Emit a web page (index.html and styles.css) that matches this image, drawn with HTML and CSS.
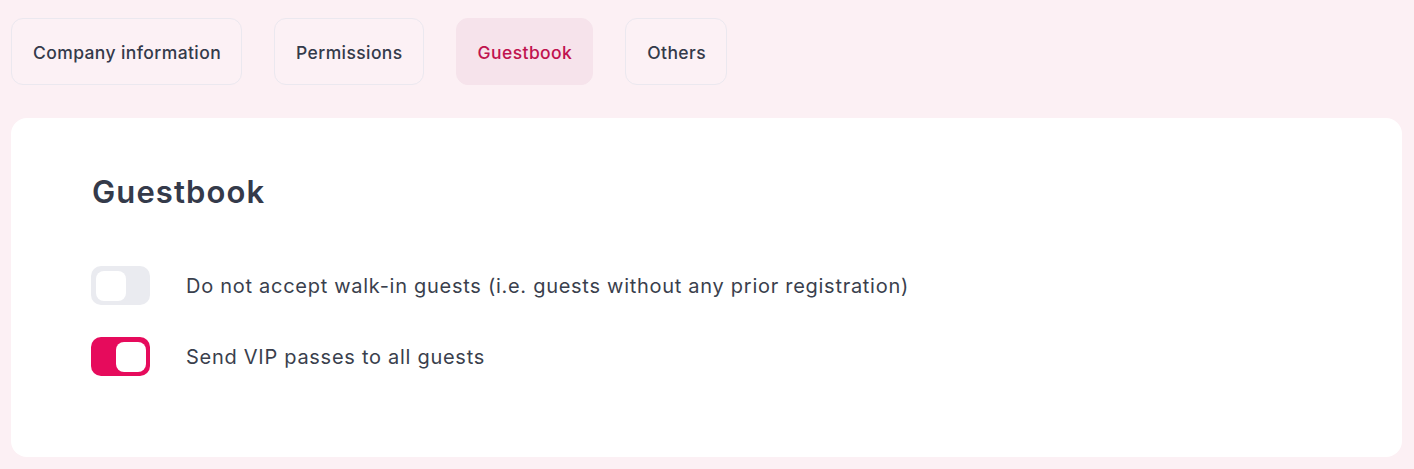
FILE: index.html
```html
<!DOCTYPE html>
<html>
<head>
<meta charset="utf-8">
<link rel="stylesheet" href="styles.css">
</head>
<body>
<div class="page">
  <nav class="tabs">
    <div class="tab">Company information</div>
    <div class="tab">Permissions</div>
    <div class="tab active">Guestbook</div>
    <div class="tab">Others</div>
  </nav>
  <section class="card">
    <h1 class="title">Guestbook</h1>
    <div class="row">
      <span class="toggle"><span class="knob"></span></span>
      <span class="label">Do not accept walk-in guests (i.e. guests without any prior registration)</span>
    </div>
    <div class="row">
      <span class="toggle on"><span class="knob"></span></span>
      <span class="label">Send VIP passes to all guests</span>
    </div>
  </section>
</div>
</body>
</html>
```
FILE: styles.css
```css
* { box-sizing: border-box; }
html, body { margin: 0; padding: 0; }
body {
  background: #fcf0f4;
  font-family: "Inter", "Noto Sans", sans-serif;
  color: #343a4a;
  width: 1414px;
  height: 469px;
  overflow: hidden;
}
.page {
  padding: 18px 12px 0 11px;
}
.tabs {
  display: flex;
  gap: 32px;
}
.tab {
  height: 67px;
  padding: 1px 20px 0 21px;
  display: flex;
  align-items: center;
  border: 1px solid #ebe8ef;
  border-radius: 12px;
  font-size: 17.5px;
  letter-spacing: 0.4px;
  font-weight: 500;
  color: #343a4a;
  background: #fcf1f5;
}
.tab.active {
  background: #f6e3eb;
  border-color: #f6e3eb;
  color: #c0134f;
}
.card {
  margin-top: 33px;
  background: #ffffff;
  border-radius: 16px;
  height: 339px;
  padding: 54px 80px 0 80px;
}
.title {
  margin: 0 0 54px 1px;
  font-size: 31px;
  letter-spacing: 1.1px;
  font-weight: 600;
  color: #343a4a;
  line-height: 40px;
}
.row {
  display: flex;
  align-items: center;
  gap: 36px;
  margin-bottom: 32px;
}
.toggle {
  width: 59px;
  height: 39px;
  border-radius: 10px;
  background: #eaebf0;
  display: flex;
  align-items: center;
  padding: 0 5px;
  flex-shrink: 0;
}
.toggle.on {
  background: #e60b5c;
  justify-content: flex-end;
  padding: 0 4px;
}
.knob {
  width: 30px;
  height: 30px;
  border-radius: 8px;
  background: #ffffff;
}
.label {
  font-size: 20px;
  letter-spacing: 0.72px;
  color: #3a3f4d;
}
```
